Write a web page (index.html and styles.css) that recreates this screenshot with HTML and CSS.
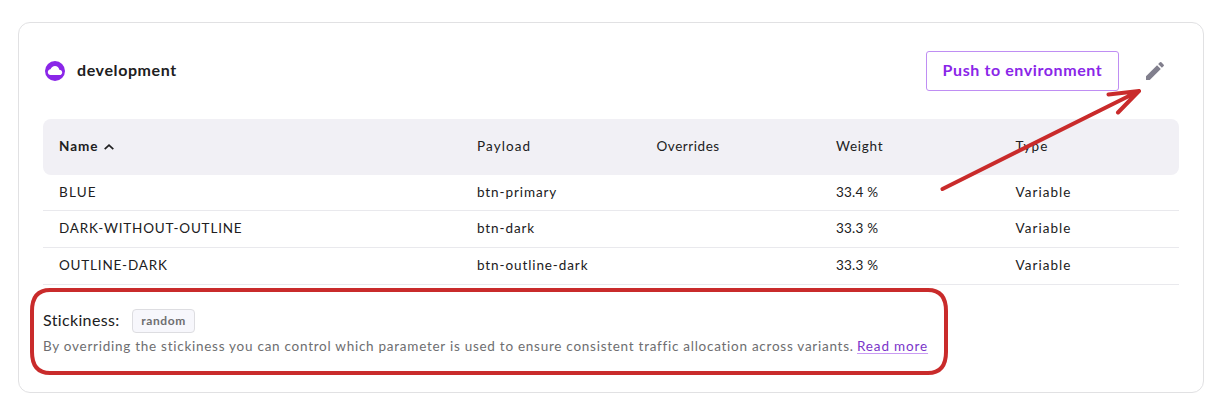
FILE: index.html
```html
<!DOCTYPE html>
<html lang="en">
<head>
<meta charset="utf-8">
<title>Variants</title>
<link rel="stylesheet" href="styles.css">
</head>
<body>
<main class="card">
  <header class="card-header">
    <svg class="cloud" viewBox="2 2 20 20"><circle cx="12" cy="12" r="10" fill="#8a26e8"/><path fill="#fff" d="M16.700 16H7.600C6.100 16 4.800 14.800 4.800 13.200S6 10.400 7.500 10.300C8.300 8.300 9.900 7 12 7C14.200 7 16 8.600 16.300 10.700C18 10.700 19.200 11.900 19.200 13.400S18.100 16 16.700 16z"/></svg>
    <h1 class="title">development</h1>
    <button class="push">Push to environment</button>
    <svg class="pencil" viewBox="0 0 24 24"><path fill="#817f8d" d="M3 17.25V21h3.75L17.81 9.94l-3.75-3.75L3 17.25zM20.71 7.04c.39-.39.39-1.02 0-1.41l-2.34-2.34a.9959.9959 0 0 0-1.41 0l-1.83 1.83 3.75 3.75 1.83-1.83z"/></svg>
  </header>
  <section class="table">
    <div class="row head"><span class="sorted">Name<svg class="caret" viewBox="0 0 10 6"><path d="M.7 5.200 5 1.200 9.300 5.200" fill="none" stroke="#202021" stroke-width="1.700"/></svg></span><span class="h-payload">Payload</span><span class="h-over">Overrides</span><span class="h-weight">Weight</span><span class="h-type">Type</span></div>
    <div class="row first"><span class="upper short">BLUE</span><span class="payload">btn-primary</span><span></span><span class="weight">33.4 %</span><span class="type">Variable</span></div>
    <div class="row"><span class="upper">DARK-WITHOUT-OUTLINE</span><span class="payload">btn-dark</span><span></span><span class="weight">33.3 %</span><span class="type">Variable</span></div>
    <div class="row"><span class="upper">OUTLINE-DARK</span><span class="payload">btn-outline-dark</span><span></span><span class="weight">33.3 %</span><span class="type">Variable</span></div>
  </section>
  <section class="stickiness">
    <div class="stick-line"><span class="stick-label">Stickiness:</span><span class="badge">random</span></div>
    <p class="help"><span class="help-text">By overriding the stickiness you can control which parameter is used to ensure consistent traffic allocation across variants.</span><a class="link" href="#">Read more</a></p>
  </section>
</main>
<svg class="annotations" viewBox="0 0 1223 412" fill="none" stroke="#c92b2b" stroke-width="4" stroke-linecap="round" stroke-linejoin="round">
  <path d="M50 290H928Q946 290 946 311V352Q946 373 928 373H50Q32 373 32 352V311Q32 290 50 290Z"/>
  <path d="M942.5 189 1139 91M1108.500 94.500 1139 91 1118 112.500"/>
</svg>
</body>
</html>
```

FILE: styles.css
```css
* { box-sizing: border-box; }
body { margin: 0; padding: 22px 19px 0 18px; height: 412px; overflow: hidden; background: #fff; color: #202021; font-family: Lato, sans-serif; font-size: 13.5px; white-space: nowrap; }
.card { height: 371px; border: 1px solid #e1e1e3; border-radius: 12px; padding: 28px 24px 0; }
.card-header { display: flex; align-items: center; height: 40px; padding-left: 2px; }
.cloud { width: 20px; height: 20px; margin-right: 12px; }
.title { margin: 0; padding-bottom: 3px; font-size: 16px; font-weight: 700; letter-spacing: .6px; }
.push { margin-left: auto; width: 193px; height: 40px; padding: 0 0 3px; border: 1px solid #bf8ef3; border-radius: 3px; background: #fff; color: #8a26e8; font: 700 16px Lato, sans-serif; letter-spacing: .6px; }
.pencil { width: 24px; height: 24px; margin: 0 12px 0 24px; }
.table { margin-top: 28px; }
.row { display: grid; grid-template-columns: 418px 179.500px 179.500px 179.500px 1fr; align-items: center; height: 37px; padding: 0 0 2px 16px; border-bottom: 1px solid #e9e9ed; letter-spacing: .4px; }
.row.first { height: 36px; }
.row.head { height: 56px; border: 0; border-radius: 8px; background: #f1f0f5; }
.sorted { font-weight: 700; letter-spacing: .95px; }
.caret { width: 10px; height: 6px; margin: 0 0 1px 6px; }
.h-payload { letter-spacing: 1.1px; }
.h-over { letter-spacing: .55px; }
.h-weight { letter-spacing: .75px; }
.h-type { letter-spacing: 1.15px; }
.upper { letter-spacing: .8px; }
.upper.short { letter-spacing: 1.2px; }
.payload { letter-spacing: .9px; }
.weight { letter-spacing: .2px; }
.type { letter-spacing: 1.05px; }
.stickiness { padding-top: 24px; }
.stick-line { display: flex; align-items: center; height: 24px; }
.stick-label { width: 89px; font-size: 16px; letter-spacing: .35px; padding-bottom: 4px; }
.badge { width: 63px; height: 24px; border: 1px solid #dddde1; border-radius: 4px; background: #f7f7fc; color: #6e6e70; font-size: 12px; font-weight: 700; line-height: 22px; text-align: center; letter-spacing: .6px; }
.help { display: flex; margin: 5px 0 0; color: #6e6e70; line-height: 16px; }
.help-text { width: 814px; letter-spacing: .735px; }
.link { color: #7b35c9; letter-spacing: .85px; text-decoration-color: #c99bf3; text-decoration-thickness: 1px; text-underline-offset: 2px; }
.annotations { position: absolute; left: 0; top: 0; width: 1223px; height: 412px; pointer-events: none; }
```
